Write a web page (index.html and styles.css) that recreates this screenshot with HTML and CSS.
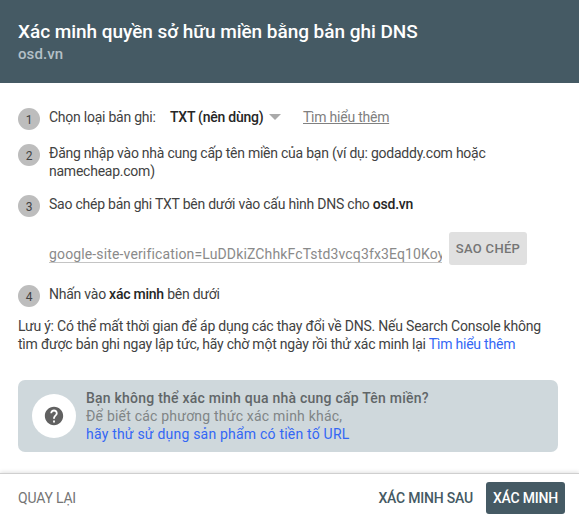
FILE: index.html
```html
<!DOCTYPE html>
<html lang="vi">
<head>
<meta charset="utf-8">
<title>Xác minh quyền sở hữu miền</title>
<link rel="stylesheet" href="styles.css">
</head>
<body>
<main class="dialog">
  <header class="header">
    <h1 class="title">Xác minh quyền sở hữu miền bằng bản ghi DNS</h1>
    <p class="domain">osd.vn</p>
  </header>
  <section class="content">
    <ol class="steps">
      <li class="step step-select"><span class="number">1</span>
        <div class="step-body select-row"><span class="label">Chọn loại bản ghi:</span><span class="select">TXT (nên dùng)<i class="arrow"></i></span><a class="more">Tìm hiểu thêm</a></div>
      </li>
      <li class="step step-login"><span class="number">2</span>
        <div class="step-body">Đăng nhập vào nhà cung cấp tên miền của bạn (ví dụ: godaddy.com hoặc<br>namecheap.com)</div>
      </li>
      <li class="step step-copy"><span class="number">3</span>
        <div class="step-body">Sao chép bản ghi TXT bên dưới vào cấu hình DNS cho <b>osd.vn</b>
          <div class="copy-row"><div class="code">google-site-verification=LuDDkiZChhkFcTstd3vcq3fx3Eq10Koy</div><button class="copy">SAO CHÉP</button></div>
        </div>
      </li>
      <li class="step step-verify"><span class="number">4</span>
        <div class="step-body">Nhấn vào <b>xác minh</b> bên dưới</div>
      </li>
    </ol>
    <p class="note">Lưu ý: Có thể mất thời gian để áp dụng các thay đổi về DNS. Nếu Search Console không<br>tìm được bản ghi ngay lập tức, hãy chờ một ngày rồi thử xác minh lại <a class="link">Tìm hiểu thêm</a></p>
    <aside class="banner">
      <span class="help"><svg width="22" height="22" viewBox="0 0 24 24"><path fill="#616161" d="M12 2C6.48 2 2 6.48 2 12s4.480 10 10 10 10-4.480 10-10S17.520 2 12 2zm1 17h-2v-2h2v2zm2.070-7.750l-.9.920C13.450 12.900 13 13.500 13 15h-2v-.5c0-1.100.450-2.100 1.170-2.830l1.240-1.260c.370-.360.590-.860.590-1.410 0-1.100-.9-2-2-2s-2 .9-2 2H8c0-2.210 1.790-4 4-4s4 1.790 4 4c0 .880-.360 1.680-.930 2.250z"/></svg></span>
      <div class="banner-text"><b class="banner-title">Bạn không thể xác minh qua nhà cung cấp Tên miền?</b><br>Để biết các phương thức xác minh khác,<br><a class="link">hãy thử sử dụng sản phẩm có tiền tố URL</a></div>
    </aside>
  </section>
  <footer class="footer">
    <button class="back">QUAY LẠI</button>
    <button class="later">XÁC MINH SAU</button>
    <button class="verify">XÁC MINH</button>
  </footer>
</main>
</body>
</html>
```
FILE: styles.css
```css
* { box-sizing: border-box; }
body { margin: 0; background: #fff; font: 14px/18px Roboto, sans-serif; letter-spacing: -.24px; color: #424242; }
h1, p, ol { margin: 0; padding: 0; }
ol { list-style: none; }
b { font-weight: 500; color: #262626; }
button { border: 0; padding: 0; background: none; font: 500 14px/18px Roboto, sans-serif; letter-spacing: -.2px; white-space: nowrap; }
.dialog { width: 579px; height: 523px; display: flex; flex-direction: column; overflow: hidden; }
.header { height: 83px; padding: 20px 18px 0; background: #455a64; flex: none; }
.title { color: #fff; font-size: 19px; line-height: 24px; font-weight: 500; letter-spacing: -.04px; white-space: nowrap; }
.domain { color: #b4c0c7; font-size: 15px; line-height: 20px; font-weight: 500; letter-spacing: .1px; }
.content { height: 390px; padding: 25px 21px 0 18px; flex: none; }
.step { display: flex; gap: 9px; white-space: nowrap; }
.number { width: 22px; height: 22px; border-radius: 50%; background: #bdbdbd; font-size: 12px; line-height: 24px; letter-spacing: 0; text-align: center; flex: none; }
.step-body { flex: 1; min-width: 0; }
.step-select { height: 36px; }
.step-login { height: 51px; }
.step-copy { height: 90px; }
.step-verify { height: 32px; }
.select-row { display: flex; }
.label { width: 121px; }
.select { width: 133px; font-weight: 500; color: #262626; display: flex; gap: 6px; align-items: center; height: 18px; }
.arrow { border: 6px solid transparent; border-top-color: #aaa; border-bottom: 0; }
.more { color: #808080; text-decoration: underline; }
.copy-row { display: flex; gap: 7px; margin-top: 19px; }
.code { width: 393px; height: 31px; padding-top: 13px; overflow: hidden; letter-spacing: .14px; color: #8a8a8a; border-bottom: 1px solid #c4c4c4; }
.copy { width: 78px; height: 33px; border-radius: 3px; background: #e0e0e0; color: #757575; font-size: 13px; letter-spacing: .3px; }
.note { letter-spacing: -.22px; white-space: nowrap; }
.link { color: #3367f5; }
.banner { height: 72px; margin-top: 27px; padding-left: 14px; border-radius: 7px; background: #cfd8dc; display: flex; align-items: center; gap: 10px; }
.help { width: 44px; height: 44px; border-radius: 50%; background: #fff; display: grid; place-items: center; }
.banner-text { color: #808586; letter-spacing: .21px; white-space: nowrap; }
.banner-title { color: #616668; letter-spacing: .23px; }
.footer { height: 50px; border-top: 1px solid #cfcfcf; box-shadow: 0 -1px 4px rgba(0,0,0,.12); display: flex; align-items: center; padding: 0 14px 2px 18px; flex: none; }
.back { color: #757575; font-weight: 400; }
.later { margin-left: auto; margin-right: 13px; color: #455a64; }
.verify { width: 79px; height: 32px; border-radius: 3px; background: #455a64; color: #fff; }
```
